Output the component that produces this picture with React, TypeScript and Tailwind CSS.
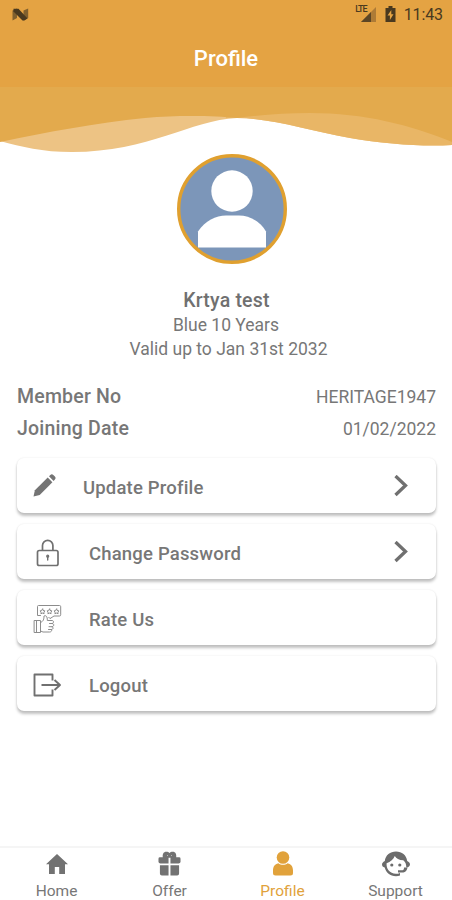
import React from "react";

const stroke = { fill: "none", stroke: "currentColor", strokeLinecap: "round", strokeLinejoin: "round" } as const;

function StatusBar() {
  return (
    <div className="flex h-7 items-center justify-between pl-3 pr-[9px] text-[#49391f]">
      <svg width="17" height="13" viewBox="0 0 17 13">
        <path d="M.5 2.500 5 .5v9.500L.5 12.500z" fill="#80602e" />
        <path d="M11.500 2.500 16.200.5v9.500l-4.700 2.500z" fill="#80602e" />
        <path d="M1.500.7h5l9 9.800-3.200 2H10.500L1.500 3.500z" fill="#49391f" />
      </svg>
      <div className="flex items-center">
        <span className="mb-[9px] text-[9px] font-medium leading-none tracking-[-1px]">LTE</span>
        <svg className="-ml-[6px] mt-px mr-[9px]" width="15" height="15" viewBox="0 0 15 15">
          <path d="M15 0v15H0z" fill="#ad7b36" />
          <path d="M10 5v10H0z" fill="#5c4625" />
        </svg>
        <svg className="mr-[8px]" width="11" height="16" viewBox="0 0 10 16">
          <path fillRule="evenodd" d="M3 0h4v2h3v14H0V2h3zM5.800 4 2 9.500h2.400V14L8 8.200H5.800z" fill="currentColor" />
        </svg>
        <span className="pt-px text-[16px] leading-none tracking-[-0.1px]">11:43</span>
      </div>
    </div>
  );
}

function Avatar() {
  return (
    <svg className="mt-px" width="110" height="110" viewBox="0 0 110 110">
      <circle cx="55" cy="55" r="53.300" fill="#7c96b9" stroke="#e0a02f" strokeWidth="3.400" />
      <circle cx="55" cy="37" r="20.700" fill="#fff" />
      <path d="M21 93.500V77.500C28 67 39 61.500 49 61.500h13C72 61.500 83 67 89 77.500v16z" fill="#fff" />
    </svg>
  );
}

function PencilIcon() {
  return (
    <svg width="23" height="23" viewBox="0 0 23 23" fill="#747474">
      <path d="m.5 22.500 1.400-6.200L14.700 3.500l4.700 4.700L6.700 20.900z" />
      <path d="m16 2.200 1.300-1.300c1-1 2.200-.8 3 0l1.600 1.600c.9.900.9 2.100 0 3L20.600 6.900z" />
    </svg>
  );
}

function LockIcon() {
  return (
    <svg width="24" height="28" viewBox="0 0 24 28" {...stroke} className="text-[#707070]">
      <rect x="1.500" y="11.500" width="20.500" height="15" rx="1.800" strokeWidth="1.700" />
      <path d="M6.500 11V6.500a5.200 5.200 0 0 1 10.400 0V11" strokeWidth="1.700" />
      <path d="M11.700 17.500v3.600" strokeWidth="1.400" />
      <circle cx="11.700" cy="17.200" r="1" strokeWidth="1.200" />
    </svg>
  );
}

function RateIcon() {
  return (
    <svg width="30" height="30" viewBox="0 0 30 30" {...stroke} strokeWidth="1" className="text-[#8c8c8c]">
      <path d="M4.500 5V2.500q0-1 1-1h21q1.200 0 1.200 1.200v8.100q0 1.200-1.200 1.200H21l-4 2.600-1.200-1.300M4.500 5v6.500h3" />
      <path d="m9.500 5-.9 1.500-1.500.4 1 1.200-.2 1.600 1.600-.6 1.600.6-.2-1.600 1-1.200-1.500-.4zM16.500 5l-.9 1.500-1.500.4 1 1.200-.2 1.600 1.600-.6 1.600.6-.2-1.600 1-1.200-1.500-.4zM23.500 5l-.9 1.500-1.500.4 1 1.200-.2 1.600 1.600-.6 1.600.6-.2-1.600 1-1.200-1.500-.4z" />
      <path d="M1.500 16.500h6v12h-6zM3.500 16.500v12M7.500 18.500c3-1 3.500-3.500 3.500-6.500 2-1 3.500.5 3.300 4.500h4.700c2 0 2 2.800 0 3 2.500 0 2.200 3.200-.2 3.200 2 .4 1.500 2.800-.5 2.800 1 1-.1 2.500-1.600 2.500H10l-2.500-1M16.500 19.500H19M16 22.700h3M15.500 25.500h3" />
    </svg>
  );
}

function LogoutIcon() {
  return (
    <svg width="29" height="25" viewBox="0 0 29 25" {...stroke} strokeLinecap="butt" strokeWidth="1.900" className="mt-[3px] text-[#707070]">
      <path d="M19.500 7.500V1.500H1.500v21h18v-6M8.500 12h18M21.500 7l5.500 5-5.500 5" />
    </svg>
  );
}

function Chevron() {
  return (
    <svg className="ml-auto mr-7" width="14" height="22" viewBox="0 0 14 22" fill="none" stroke="#707070" strokeWidth="3.300">
      <path d="M1.500 1 11.500 10.500l-10 9.500" />
    </svg>
  );
}

function HomeIcon() {
  return (
    <svg width="22" height="20" viewBox="0 0 22 20" fill="#727272">
      <path d="M11 0 22 10.200h-3V20h-5.800v-7H8.800v7H3v-9.800H0z" />
    </svg>
  );
}

function GiftIcon() {
  return (
    <svg className="-mt-[2px]" width="23" height="25" viewBox="0 0 24 25" fill="#727272">
      <path fillRule="evenodd" d="M2 6h3C4.500 2.500 6 .2 8.500.2c1.700 0 2.800.6 3.500 1.300.7-.7 1.800-1.300 3.500-1.300 2.500 0 4 2.300 3.500 5.800h3q1.500 0 1.500 1.500v3.500q-.2 1.500-2 1.500H13V6.500h-2v6H2.500q-1.800 0-2-1.500V7.500Q.5 6 2 6zM9.500 4c-.3.400.1.800.9.800 0-.6-.4-1-.9-.8zm5 0c-.5-.2-.9.200-.9.800.8 0 1.200-.4.900-.8z" />
      <path d="M2 14.200h9V25H4q-2 0-2-2zM13 14.200h9V23q0 2-2 2h-7z" />
    </svg>
  );
}

function PersonIcon() {
  return (
    <svg className="-mt-[2px]" width="20" height="25" viewBox="0 0 20 25" fill="#e1a23b">
      <circle cx="10" cy="6.500" r="6.300" />
      <path d="M5.300 12.200c2.800 2.100 6.600 2.100 9.400 0 3.600.8 5.300 3.700 5.300 7.300V22q0 2.500-2.500 2.500h-15Q0 24.500 0 22v-2.500c0-3.600 1.700-6.500 5.300-7.300z" />
    </svg>
  );
}

function SupportIcon() {
  return (
    <svg width="28" height="26" viewBox="0 0 28 26" fill="#6c6c6c">
      <path d="M2.800 10C3.700 4 8 .5 14 .5S24.300 4 25.200 10l1.500 1q1.300.8 1.300 2.500t-2 2.800l-1.700.2c0-3.500-.8-5.300-3-7.300-4.300 0-7-1.600-8.500-4.200-1.200 3.400-4.200 5.700-8.200 7.300-.5 5.500 3 10.400 9.400 10.400 1.500 0 2.700-.2 4-.8v2.500c-1.200.5-2.500.8-4 .8-6 0-10-3.700-11.300-8.700C1 16.200 0 15 0 13.500S.9 11.200 2.800 10z" />
      <circle cx="9.800" cy="14" r="1.600" />
      <circle cx="17.800" cy="14" r="1.600" />
      <path d="M22 16.500h3.500c-.5 3-2 4.700-4.200 5h-5.300v-2.300h4.500c1 0 1.500-1 1.500-2.700z" />
    </svg>
  );
}

const actions = [
  { label: "Update Profile", icon: <PencilIcon />, iconClass: "pl-4 w-[66px] pb-[1px]", arrow: true },
  { label: "Change Password", icon: <LockIcon />, iconClass: "pl-[19px] w-[72px] pt-[3px]", arrow: true },
  { label: "Rate Us", icon: <RateIcon />, iconClass: "pl-4 w-[72px] pt-[2px]", arrow: false },
  { label: "Logout", icon: <LogoutIcon />, iconClass: "pl-4 w-[72px]", arrow: false },
];

const tabs = [
  { label: "Home", icon: <HomeIcon />, labelClass: "text-[#777]" },
  { label: "Offer", icon: <GiftIcon />, labelClass: "text-[#777]" },
  { label: "Profile", icon: <PersonIcon />, labelClass: "text-[#e1a23b]" },
  { label: "Support", icon: <SupportIcon />, labelClass: "text-[#777]" },
];

export default function App() {
  return (
    <div className="flex h-[900px] w-[452px] flex-col overflow-hidden bg-white font-['Roboto',sans-serif] text-[#777]">
      <header className="h-[87px] shrink-0 bg-[#e4a343]">
        <StatusBar />
        <h1 className="mt-[16px] text-center text-[22px] font-medium leading-[30px] text-white">Profile</h1>
      </header>
      <svg className="shrink-0" width="452" height="66" viewBox="0 0 452 66">
        <path d="M0 0H452V58C424 60 385 57 350 51C308 43 270 31 237 31C190 33 150 65 72 65C42 65 22 60 0 54Z" fill="#edc384" />
        <path d="M226 0H452V58C424 60 385 57 350 51C308 43 270 31 237 31H226Z" fill="#e9b666" />
        <path d="M0 0H452V55C410 38 365 26 310 26C285 26 260 28 237 31C215 29 180 28 145 31C95 36 48 45 0 55Z" fill="#e3aa4d" />
      </svg>

      <section className="flex flex-col items-center pl-[12px]">
        <Avatar />
      </section>
      <section className="mt-6 text-center">
        <h2 className="pt-px pl-px text-[19.500px] font-medium leading-6 tracking-[0.2px] text-[#707070]">Krtya test</h2>
        <p className="text-[17.500px] leading-6">Blue 10 Years</p>
        <p className="pl-[5px] text-[17.500px] leading-6">Valid up to Jan 31st 2032</p>
      </section>

      <dl className="mt-[20px] pl-[17px] pr-4 leading-8">
        <div className="flex justify-between">
          <dt className="text-[19.500px] font-medium tracking-[0.2px]">Member No</dt>
          <dd className="text-[17.500px]">HERITAGE1947</dd>
        </div>
        <div className="flex justify-between">
          <dt className="text-[19.500px] font-medium tracking-[0.2px]">Joining Date</dt>
          <dd className="text-[17.500px]">01/02/2022</dd>
        </div>
      </dl>

      <nav className="mt-[13px] flex flex-col gap-[11px] pl-[17px] pr-4">
        {actions.map((a) => (
          <button key={a.label} className="flex h-[55px] items-center rounded-[7px] bg-white text-left shadow-[0_3px_3px_rgba(0,0,0,0.24),0_0_2px_rgba(0,0,0,0.10)]">
            <span className={a.iconClass}>{a.icon}</span>
            <span className="pt-[4px] text-[18.500px] font-medium leading-6 tracking-[0.18px]">{a.label}</span>
            {a.arrow && <Chevron />}
          </button>
        ))}
      </nav>

      <footer className="mt-auto grid h-[54px] shrink-0 grid-cols-4 border-t-2 border-[#f5f5f5]">
        {tabs.map((t) => (
          <a key={t.label} className="flex flex-col items-center">
            <span className="flex h-8 items-center">{t.icon}</span>
            <span className={`text-[15.500px] leading-[22px] ${t.labelClass}`}>{t.label}</span>
          </a>
        ))}
      </footer>
    </div>
  );
}
